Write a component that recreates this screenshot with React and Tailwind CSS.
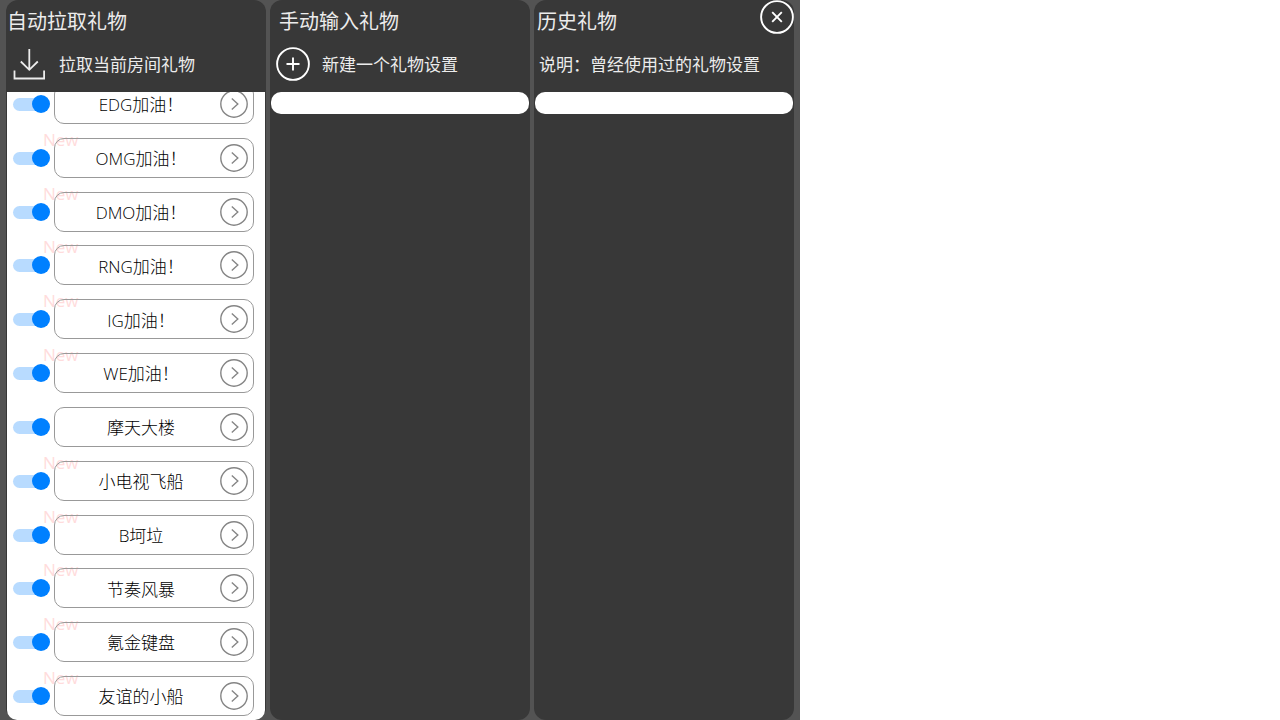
import React, { useState } from "react";
import clsx from "clsx";

const ROOM_GIFTS = [
  { id: 1, name: "EDG加油！", isNew: false },
  { id: 2, name: "OMG加油！", isNew: true },
  { id: 3, name: "DMO加油！", isNew: true },
  { id: 4, name: "RNG加油！", isNew: true },
  { id: 5, name: "IG加油！", isNew: true },
  { id: 6, name: "WE加油！", isNew: true },
  { id: 7, name: "摩天大楼", isNew: false },
  { id: 8, name: "小电视飞船", isNew: true },
  { id: 9, name: "B坷垃", isNew: true },
  { id: 10, name: "节奏风暴", isNew: true },
  { id: 11, name: "氪金键盘", isNew: true },
  { id: 12, name: "友谊的小船", isNew: true },
];

function DownloadIcon() {
  return (
    <svg
      className="w-8 h-8 shrink-0"
      viewBox="0 0 32 32"
      fill="none"
      stroke="currentColor"
      strokeWidth="1.8"
      aria-hidden="true"
    >
      <path d="M16.3 1v20.5M7.8 13.5l8.5 8.3 8.5-8.3" />
      <path d="M1.5 22.5v8h29.6v-8" />
    </svg>
  );
}

function PlusCircleIcon() {
  return (
    <svg
      className="w-[34px] h-[34px] shrink-0"
      viewBox="0 0 34 34"
      fill="none"
      stroke="currentColor"
      strokeWidth="1.9"
      aria-hidden="true"
    >
      <circle cx="17" cy="17" r="15.9" />
      <path d="M17 10.5v13M10.5 17h13" />
    </svg>
  );
}

function CloseCircleIcon() {
  return (
    <svg
      className="w-[34px] h-[34px]"
      viewBox="0 0 34 34"
      fill="none"
      stroke="currentColor"
      strokeWidth="1.9"
      aria-hidden="true"
    >
      <circle cx="17" cy="17" r="15.9" />
      <path d="M12.2 12.2l9.6 9.6M21.8 12.2l-9.6 9.6" />
    </svg>
  );
}

function ChevronCircleIcon() {
  return (
    <svg
      className="w-7 h-7"
      viewBox="0 0 28 28"
      fill="none"
      stroke="currentColor"
      strokeWidth="1.4"
      aria-hidden="true"
    >
      <circle cx="14" cy="14" r="13.2" />
      <path d="M11.8 8.6l6 5.4-6 5.4" />
    </svg>
  );
}

function Panel({ title, titleClass, action, children }) {
  return (
    <section className="flex flex-col min-w-0 min-h-0 px-px rounded-xl bg-[#383838]">
      <header className="shrink-0 pb-2 text-[#ececec]">
        <h2
          className={clsx(
            "flex items-center h-11 text-[20px] whitespace-nowrap",
            titleClass
          )}
        >
          {title}
        </h2>
        <div className="flex items-center h-10 text-[17px] whitespace-nowrap">
          {action}
        </div>
      </header>
      {children}
    </section>
  );
}

function GiftRow({ gift, enabled, onToggle }) {
  return (
    <li className="relative flex items-center shrink-0 gap-1 h-10 pl-1.5 pr-[11px]">
      {gift.isNew && (
        <span className="absolute left-9 -top-2 text-[17px] leading-5 text-[#ffdcdc]">
          New
        </span>
      )}
      <input
        type="checkbox"
        role="switch"
        aria-label={gift.name}
        checked={enabled}
        onChange={() => onToggle(gift.id)}
        // Track is the ::before, knob is the ::after
        className="relative shrink-0 w-[37px] h-[18px] appearance-none cursor-pointer before:absolute before:left-0 before:top-[3px] before:w-[34px] before:h-[13px] before:rounded-full before:bg-zinc-300 checked:before:bg-[#b8dbff] after:absolute after:left-0 after:top-0 after:size-[18px] after:rounded-full after:bg-zinc-500 checked:after:left-[19px] checked:after:bg-[#0080ff]"
      />
      <button
        type="button"
        className="relative flex items-center flex-1 min-w-0 h-10 pl-[7px] pr-[5px] rounded-[10px] border border-[#999] text-black cursor-pointer"
      >
        <span className="flex-1 pt-0.5 text-[17px] font-light whitespace-nowrap">
          {gift.name}
        </span>
        <span className="text-[#858585]">
          <ChevronCircleIcon />
        </span>
      </button>
    </li>
  );
}

// Empty lists keep their padding, so they show as a thin white strip
function EmptyList({ label }) {
  return <ul aria-label={label} className="shrink-0 p-[11px] rounded-[10px] bg-white" />;
}

function App() {
  const [enabledIds, setEnabledIds] = useState(ROOM_GIFTS.map((g) => g.id));

  const handleToggle = (id) => {
    setEnabledIds((prev) =>
      prev.includes(id) ? prev.filter((x) => x !== id) : [...prev, id]
    );
  };

  return (
    <div className="min-h-screen bg-white font-['Open_Sans','Noto_Sans_CJK_SC',sans-serif]">
      <main className="relative grid grid-cols-3 gap-1 w-full max-w-[800px] h-screen px-1.5 bg-[#535353]">
        <Panel
          title="自动拉取礼物"
          action={
            <button
              type="button"
              className="flex items-center gap-[14px] pl-1.5 cursor-pointer"
            >
              <DownloadIcon />
              <span className="pt-0.5">拉取当前房间礼物</span>
            </button>
          }
        >
          <div className="flex flex-col flex-1 min-h-0 overflow-hidden rounded-b-[10px] bg-white">
            <ul className="flex flex-col flex-1 justify-between -mt-2 pb-1">
              {ROOM_GIFTS.map((gift) => (
                <GiftRow
                  key={gift.id}
                  gift={gift}
                  enabled={enabledIds.includes(gift.id)}
                  onToggle={handleToggle}
                />
              ))}
            </ul>
          </div>
        </Panel>

        <Panel
          title="手动输入礼物"
          titleClass="pl-2"
          action={
            <button
              type="button"
              className="flex items-center gap-3 pl-[5px] cursor-pointer"
            >
              <span className="text-white">
                <PlusCircleIcon />
              </span>
              <span className="pt-0.5">新建一个礼物设置</span>
            </button>
          }
        >
          <EmptyList label="手动输入礼物" />
        </Panel>

        <Panel
          title="历史礼物"
          titleClass="pl-0.5"
          action={<p className="pt-0.5 pl-1">说明：曾经使用过的礼物设置</p>}
        >
          <EmptyList label="历史礼物" />
        </Panel>

        <button
          type="button"
          aria-label="关闭"
          className="absolute top-0 right-1.5 rounded-full bg-[#383838] text-white cursor-pointer"
        >
          <CloseCircleIcon />
        </button>
      </main>
    </div>
  );
}

export default App;
